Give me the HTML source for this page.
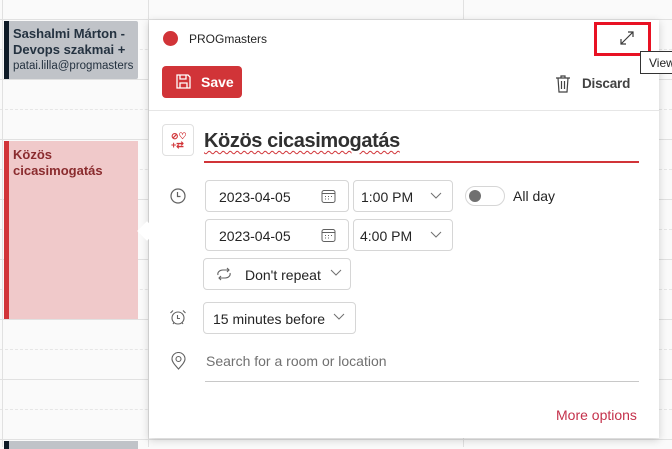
<!DOCTYPE html>
<html><head><meta charset="utf-8"><style>
*{box-sizing:border-box;margin:0;padding:0}
body{width:672px;height:447px;overflow:hidden;background:#fafafa;font-family:"Liberation Sans",sans-serif;position:relative;color:#242424}
.h{position:absolute;left:0;width:672px;height:1px;background:#e1e1e1}
.d{position:absolute;left:0;width:672px;height:0;border-top:1px dashed #e6e6e6}
.v{position:absolute;top:0;width:1px;height:447px;background:#e1e1e1}
.a{position:absolute}
.box{position:absolute;border:1px solid #d6d6d6;border-radius:4px;background:#fff;font-size:14px;color:#242424}
.ic{position:absolute;color:#616161}
</style></head><body>
<div class="h" style="top:19px"></div><div class="d" style="top:49px"></div>
<div class="h" style="top:79px"></div><div class="d" style="top:109px"></div>
<div class="h" style="top:139px"></div><div class="d" style="top:169px"></div>
<div class="h" style="top:199px"></div><div class="d" style="top:229px"></div>
<div class="h" style="top:259px"></div><div class="d" style="top:289px"></div>
<div class="h" style="top:319px"></div><div class="d" style="top:349px"></div>
<div class="h" style="top:379px"></div><div class="d" style="top:409px"></div>
<div class="h" style="top:439px"></div>
<div class="v" style="left:2px"></div><div class="v" style="left:148px"></div><div class="v" style="left:463px"></div>

<div class="a" style="left:4px;top:21px;width:134px;height:58px;background:#c0c3c8;border-radius:2px"></div>
<div class="a" style="left:4px;top:21px;width:5px;height:58px;background:#0e1a26"></div>
<div class="a" style="left:13px;top:26px;width:124px;font-size:13px;font-weight:bold;color:#243240;line-height:16px;white-space:nowrap;overflow:hidden">Sashalmi Márton -<br>Devops szakmai +</div>
<div class="a" style="left:13px;top:60px;width:124px;font-size:11.5px;color:#243240;white-space:nowrap;overflow:hidden">patai.lilla@progmasters</div>

<div class="a" style="left:4px;top:141px;width:134px;height:178px;background:#f0c9ca"></div>
<div class="a" style="left:4px;top:141px;width:5px;height:178px;background:#d13438"></div>
<div class="a" style="left:13px;top:147px;font-size:13px;font-weight:bold;color:#8a2b2e;line-height:16px">Közös<br>cicasimogatás</div>
<div class="a" style="left:4px;top:441px;width:134px;height:8px;background:#c0c3c8"></div>
<div class="a" style="left:4px;top:441px;width:5px;height:8px;background:#0e1a26"></div>

<div class="a" style="left:149px;top:20px;width:510px;height:418px;background:#fff;box-shadow:0 2px 8px rgba(0,0,0,.18)"></div>
<div class="a" style="left:140px;top:224px;width:14px;height:14px;background:#fff;transform:rotate(45deg)"></div>

<div class="a" style="left:163px;top:31px;width:15px;height:15px;border-radius:50%;background:#d13438"></div>
<div class="a" style="left:189px;top:32px;font-size:12px;color:#242424">PROGmasters</div>
<div class="a" style="left:594px;top:22px;width:57px;height:34px;border:3px solid #e81123"></div>
<svg class="a" style="left:619px;top:30px" width="16" height="16" viewBox="0 0 16 16" fill="none" stroke="#3a3a3a" stroke-width="1.2"><path d="M2 14L14 2M9 2h5v5M2 9v5h5"/></svg>
<div class="a" style="left:640px;top:51px;width:40px;height:23px;border:1px solid #333;background:#fff;font-size:12px;padding:4px 0 0 8px">View</div>

<div class="a" style="left:162px;top:66px;width:80px;height:32px;background:#d13438;border-radius:4px;color:#fff;font-weight:bold;font-size:14px;padding:8px 0 0 39px">Save</div>
<svg class="a" style="left:175px;top:73px" width="17" height="17" viewBox="0 0 17 17" fill="none" stroke="#fff" stroke-width="1.3"><path d="M2 2h11l2 2v11H2z M5 2v4h6V2 M5 15v-5h7v5"/></svg>
<svg class="a" style="left:555px;top:75px" width="16" height="18" viewBox="0 0 16 18" fill="none" stroke="#424242" stroke-width="1.2"><path d="M1 3h14M6 3V1h4v2M3 3l1 14h8l1-14M6.5 6v8M9.5 6v8"/></svg>
<div class="a" style="left:582px;top:76px;font-size:13.5px;font-weight:bold;color:#424242;letter-spacing:-0.2px">Discard</div>
<div class="a" style="left:149px;top:110px;width:510px;height:1px;background:#e6e6e6"></div>

<div class="a" style="left:162px;top:124px;width:32px;height:32px;border:1px solid #e0e0e0;border-radius:4px;color:#d13438;font-size:9px;line-height:9px;padding:7px 0 0 8px;font-weight:bold">⊘♡<br>+⇄</div>
<div class="a" style="left:204px;top:130px;font-size:20px;font-weight:bold;color:#303030;letter-spacing:-0.4px;text-decoration:underline wavy #d13438;text-decoration-thickness:1px;text-underline-offset:3px">Közös cicasimogatás</div>
<div class="a" style="left:204px;top:161px;width:435px;height:2px;background:#d13438"></div>

<svg class="ic" style="left:170px;top:188px" width="16" height="16" viewBox="0 0 16 16" fill="none" stroke="#616161" stroke-width="1.2"><circle cx="8" cy="8" r="7"/><path d="M7.5 4v4.5h3"/></svg>
<div class="box" style="left:205px;top:180px;width:144px;height:32px;padding:8px 0 0 13px">2023-04-05</div>
<div class="box" style="left:205px;top:219px;width:144px;height:32px;padding:8px 0 0 13px">2023-04-05</div>
<svg class="a" style="left:321px;top:189px" width="15" height="15" viewBox="0 0 15 15" fill="none" stroke="#616161"><rect x="1" y="1.5" width="13" height="12" rx="2"/><path d="M1 4.5h13M4 7.5h1M7 7.5h1M10 7.5h1M4 10h1M7 10h1"/></svg>
<svg class="a" style="left:321px;top:228px" width="15" height="15" viewBox="0 0 15 15" fill="none" stroke="#616161"><rect x="1" y="1.5" width="13" height="12" rx="2"/><path d="M1 4.5h13M4 7.5h1M7 7.5h1M10 7.5h1M4 10h1M7 10h1"/></svg>
<div class="box" style="left:353px;top:180px;width:100px;height:32px;padding:8px 0 0 7px">1:00 PM</div>
<div class="box" style="left:353px;top:219px;width:100px;height:32px;padding:8px 0 0 6px">4:00 PM</div>
<svg class="a" style="left:430px;top:192px" width="12" height="8" viewBox="0 0 12 8" fill="none" stroke="#707070"><path d="M1 1l5 5 5-5"/></svg>
<svg class="a" style="left:430px;top:231px" width="12" height="8" viewBox="0 0 12 8" fill="none" stroke="#707070"><path d="M1 1l5 5 5-5"/></svg>
<div class="a" style="left:465px;top:186px;width:40px;height:20px;border:1px solid #d6d6d6;border-radius:10px"></div>
<div class="a" style="left:469px;top:190px;width:12px;height:12px;border-radius:50%;background:#707070"></div>
<div class="a" style="left:513px;top:188px;font-size:14px">All day</div>

<div class="box" style="left:203px;top:258px;width:148px;height:32px;padding:8px 0 0 41px">Don't repeat</div>
<svg class="a" style="left:215px;top:266px" width="18" height="16" viewBox="0 0 18 16" fill="none" stroke="#616161" stroke-width="1.1"><path d="M3 9a5 4 0 0 1 5-5h6M12 2l2 2-2 2M15 7a5 4 0 0 1-5 5H4M6 14l-2-2 2-2"/></svg>
<svg class="a" style="left:330px;top:269px" width="12" height="8" viewBox="0 0 12 8" fill="none" stroke="#707070"><path d="M1 1l5 5 5-5"/></svg>

<svg class="ic" style="left:169px;top:309px" width="18" height="17" viewBox="0 0 18 17" fill="none" stroke="#616161" stroke-width="1.1"><circle cx="9" cy="9" r="6"/><path d="M8.5 6v3.5h2.5M1.5 4L4 1.5M16.5 4L14 1.5M4 15l1-1.5M14 15l-1-1.5"/></svg>
<div class="box" style="left:203px;top:302px;width:153px;height:32px;padding:8px 0 0 9px">15 minutes before</div>
<svg class="a" style="left:333px;top:313px" width="12" height="8" viewBox="0 0 12 8" fill="none" stroke="#707070"><path d="M1 1l5 5 5-5"/></svg>

<svg class="ic" style="left:171px;top:352px" width="15" height="18" viewBox="0 0 15 18" fill="none" stroke="#616161" stroke-width="1.1"><path d="M7.5 17C3 12 1 9.5 1 7a6.5 6.5 0 0 1 13 0c0 2.5-2 5-6.5 10z"/><circle cx="7.5" cy="7" r="2.5"/></svg>
<div class="a" style="left:206px;top:353px;font-size:14px;color:#707070">Search for a room or location</div>
<div class="a" style="left:205px;top:381px;width:434px;height:1px;background:#c8c8c8"></div>
<div class="a" style="left:556px;top:407px;font-size:14px;color:#c4314b">More options</div>
</body></html>
